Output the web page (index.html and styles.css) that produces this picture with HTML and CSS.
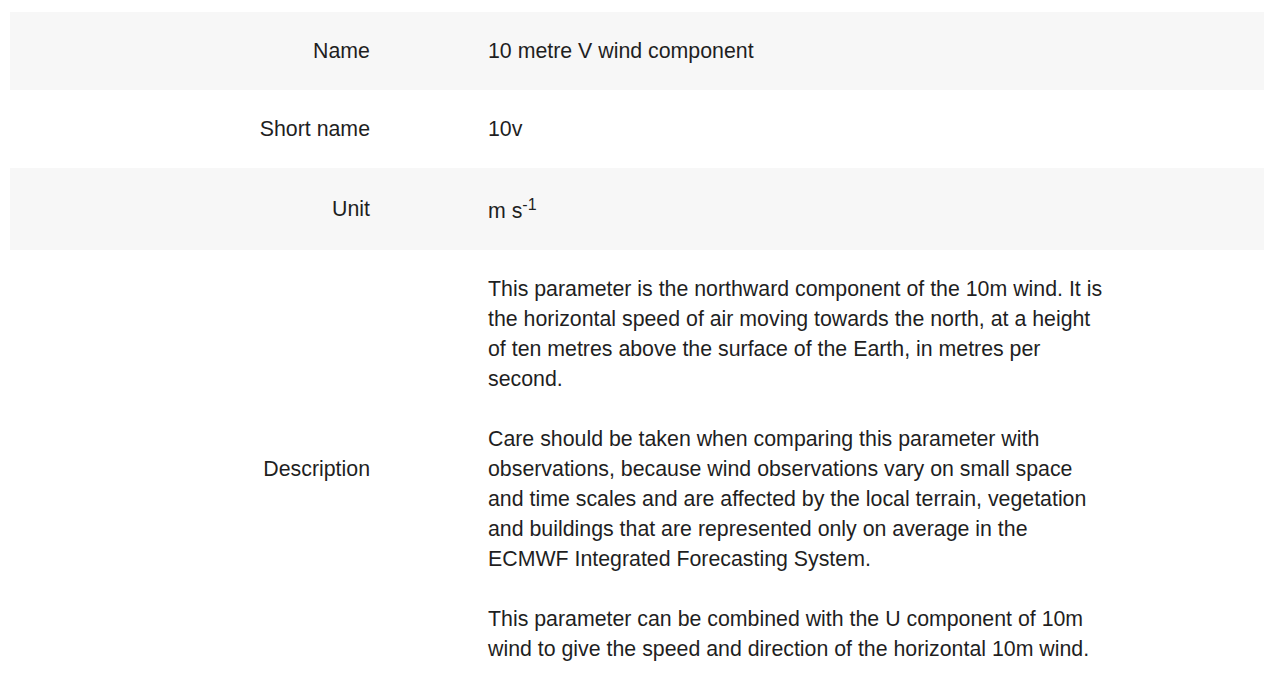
FILE: index.html
```html
<!DOCTYPE html>
<html lang="en">
<head>
<meta charset="utf-8">
<title>10 metre V wind component</title>
<link rel="stylesheet" href="styles.css">
</head>
<body>
<div class="param-table">
  <div class="row">
    <div class="label">Name</div>
    <div class="value">10 metre V wind component</div>
  </div>
  <div class="row">
    <div class="label">Short name</div>
    <div class="value">10v</div>
  </div>
  <div class="row">
    <div class="label">Unit</div>
    <div class="value">m s<sup>-1</sup></div>
  </div>
  <div class="row">
    <div class="label">Description</div>
    <div class="value">
      <p>This parameter is the northward component of the 10m wind. It is<br>the horizontal speed of air moving towards the north, at a height<br>of ten metres above the surface of the Earth, in metres per<br>second.</p>
      <p>Care should be taken when comparing this parameter with<br>observations, because wind observations vary on small space<br>and time scales and are affected by the local terrain, vegetation<br>and buildings that are represented only on average in the<br>ECMWF Integrated Forecasting System.</p>
      <p>This parameter can be combined with the U component of 10m<br>wind to give the speed and direction of the horizontal 10m wind.</p>
    </div>
  </div>
</div>
</body>
</html>
```
FILE: styles.css
```css
html, body {
  margin: 0;
  padding: 0;
  background: #ffffff;
}
body {
  font-family: "Liberation Sans", Arial, sans-serif;
  font-size: 21.33px;
  line-height: 30px;
  color: #1f1f1f;
}
.param-table {
  margin: 12px 7px 0 10px;
  display: flex;
  flex-direction: column;
}
.row {
  display: grid;
  grid-template-columns: 360px 1fr;
  align-items: center;
  padding: 24px 0;
}
.row:nth-child(odd) {
  background: #f7f7f7;
}
.label {
  text-align: right;
}
.value {
  padding-left: 118px;
  white-space: nowrap;
}
.value p {
  margin: 0 0 30px 0;
}
.value p:last-child {
  margin-bottom: 0;
}
sup {
  font-size: 16px;
  vertical-align: super;
  line-height: 26px;
}
```
